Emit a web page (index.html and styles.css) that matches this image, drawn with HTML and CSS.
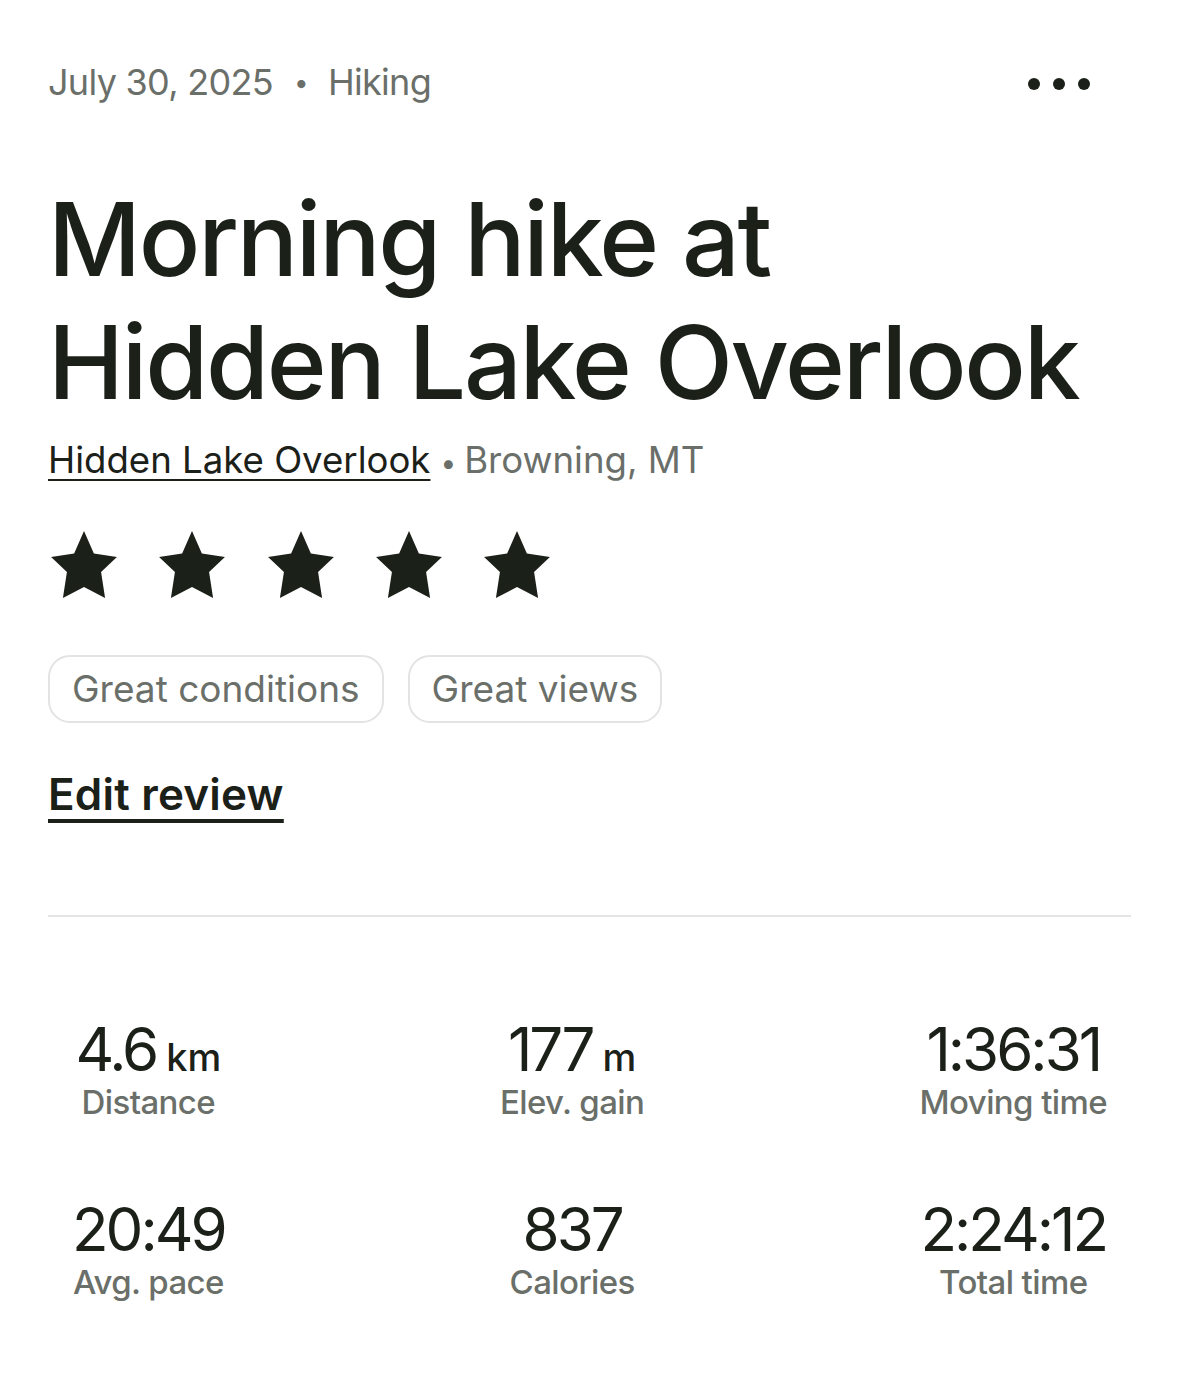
FILE: index.html
```html
<!DOCTYPE html>
<html lang="en">
<head>
<meta charset="utf-8">
<title>Morning hike at Hidden Lake Overlook</title>
<link rel="stylesheet" href="styles.css">
</head>
<body>
<main class="page">
  <header class="meta">
    <div class="meta-text">July 30, 2025<span class="meta-dot">•</span>Hiking</div>
    <button class="more" aria-label="More options"><span></span><span></span><span></span></button>
  </header>

  <h1 class="title">Morning hike at<br>Hidden Lake Overlook</h1>

  <p class="place"><a class="place-link" href="#">Hidden Lake Overlook</a><span class="place-sep">•</span>Browning, MT</p>

  <div class="stars" aria-label="5 out of 5 stars">
    <svg class="star" viewBox="0 0 70 70"><polygon points="35,2 44.6,23.8 67,27.2 51.6,41.7 55.5,67 35,56.4 14.5,67 18.4,41.7 3,27.2 25.4,23.8"/></svg>
    <svg class="star" viewBox="0 0 70 70"><polygon points="35,2 44.6,23.8 67,27.2 51.6,41.7 55.5,67 35,56.4 14.5,67 18.4,41.7 3,27.2 25.4,23.8"/></svg>
    <svg class="star" viewBox="0 0 70 70"><polygon points="35,2 44.6,23.8 67,27.2 51.6,41.7 55.5,67 35,56.4 14.5,67 18.4,41.7 3,27.2 25.4,23.8"/></svg>
    <svg class="star" viewBox="0 0 70 70"><polygon points="35,2 44.6,23.8 67,27.2 51.6,41.7 55.5,67 35,56.4 14.5,67 18.4,41.7 3,27.2 25.4,23.8"/></svg>
    <svg class="star" viewBox="0 0 70 70"><polygon points="35,2 44.6,23.8 67,27.2 51.6,41.7 55.5,67 35,56.4 14.5,67 18.4,41.7 3,27.2 25.4,23.8"/></svg>
  </div>

  <div class="chips">
    <span class="chip">Great conditions</span>
    <span class="chip">Great views</span>
  </div>

  <a class="edit" href="#">Edit review</a>

  <hr class="divider">

  <section class="stats">
    <div class="stat"><div class="stat-value">4.6<span class="unit"> km</span></div><div class="stat-label">Distance</div></div>
    <div class="stat"><div class="stat-value">177<span class="unit"> m</span></div><div class="stat-label">Elev. gain</div></div>
    <div class="stat"><div class="stat-value">1:36:31</div><div class="stat-label">Moving time</div></div>
    <div class="stat"><div class="stat-value">20:49</div><div class="stat-label">Avg. pace</div></div>
    <div class="stat"><div class="stat-value">837</div><div class="stat-label">Calories</div></div>
    <div class="stat"><div class="stat-value">2:24:12</div><div class="stat-label">Total time</div></div>
  </section>
</main>
</body>
</html>
```

FILE: styles.css
```css
* { box-sizing: border-box; }

html, body {
  margin: 0;
  background: #ffffff;
}

body {
  font-family: Inter, "Liberation Sans", sans-serif;
  color: #1b2019;
}

.page {
  padding: 0 48px 60px;
}

.meta {
  margin-top: 62px;
  display: flex;
  align-items: center;
  justify-content: space-between;
  height: 44px;
}

.meta-text {
  font-size: 36px;
  line-height: 44px;
  color: #6b6f6a;
  letter-spacing: -0.7px;
}

.meta-dot {
  font-size: 26px;
  margin: 0 20px 0 21px;
  position: relative;
  top: -3px;
}

.more {
  display: flex;
  gap: 13px;
  align-items: center;
  justify-content: center;
  width: 96px;
  height: 44px;
  margin-right: 24px;
  padding: 0;
  border: 0;
  background: transparent;
}

.more span {
  width: 12px;
  height: 12px;
  border-radius: 50%;
  background: #1b2019;
}

.title {
  margin: 72px 0 0;
  font-size: 102px;
  line-height: 123px;
  font-weight: 500;
  letter-spacing: -2.25px;
  color: #1b2019;
}

.place {
  margin: 14px 0 0;
  font-size: 36.6px;
  line-height: 44px;
  color: #6b6f6a;
  letter-spacing: 0;
}

.place-link {
  color: #1b2019;
  text-decoration: underline;
  text-decoration-thickness: 2px;
  text-underline-offset: 6px;
}

.place-sep {
  margin: 0 8px 0 10px;
  font-size: 28px;
}

.stars {
  margin-top: 44px;
  display: flex;
  gap: 36.3px;
}

.star {
  width: 72px;
  height: 72px;
  fill: #1b2019;
}

.chips {
  margin-top: 54px;
  display: flex;
  gap: 24px;
}

.chip {
  display: inline-block;
  height: 68px;
  padding: 0 22px;
  border: 2px solid #e3e3e3;
  border-radius: 22px;
  font-size: 37px;
  line-height: 64px;
  color: #6b6f6a;
}

.edit {
  display: inline-block;
  margin-top: 45px;
  font-size: 44px;
  line-height: 52px;
  font-weight: 600;
  color: #1b2019;
  text-decoration: underline;
  text-decoration-thickness: 4px;
  text-underline-offset: 9px;
  letter-spacing: 0.2px;
}

.divider {
  margin: 95px 0 0;
  border: 0;
  height: 2px;
  background: #e4e4e4;
}

.stats {
  margin-top: 101px;
  padding: 0 24px;
  display: grid;
  grid-template-columns: repeat(3, auto);
  justify-content: space-between;
  row-gap: 74px;
}

.stat {
  text-align: center;
}

.stat-value {
  font-size: 60px;
  line-height: 62px;
  font-weight: 400;
  letter-spacing: -3px;
  color: #1b2019;
}

.unit {
  font-size: 38px;
  line-height: 0;
  font-weight: 500;
  letter-spacing: 0;
}

.stat-label {
  font-size: 33px;
  line-height: 44px;
  font-weight: 500;
  color: #6b6f6a;
  letter-spacing: -0.6px;
}
```
